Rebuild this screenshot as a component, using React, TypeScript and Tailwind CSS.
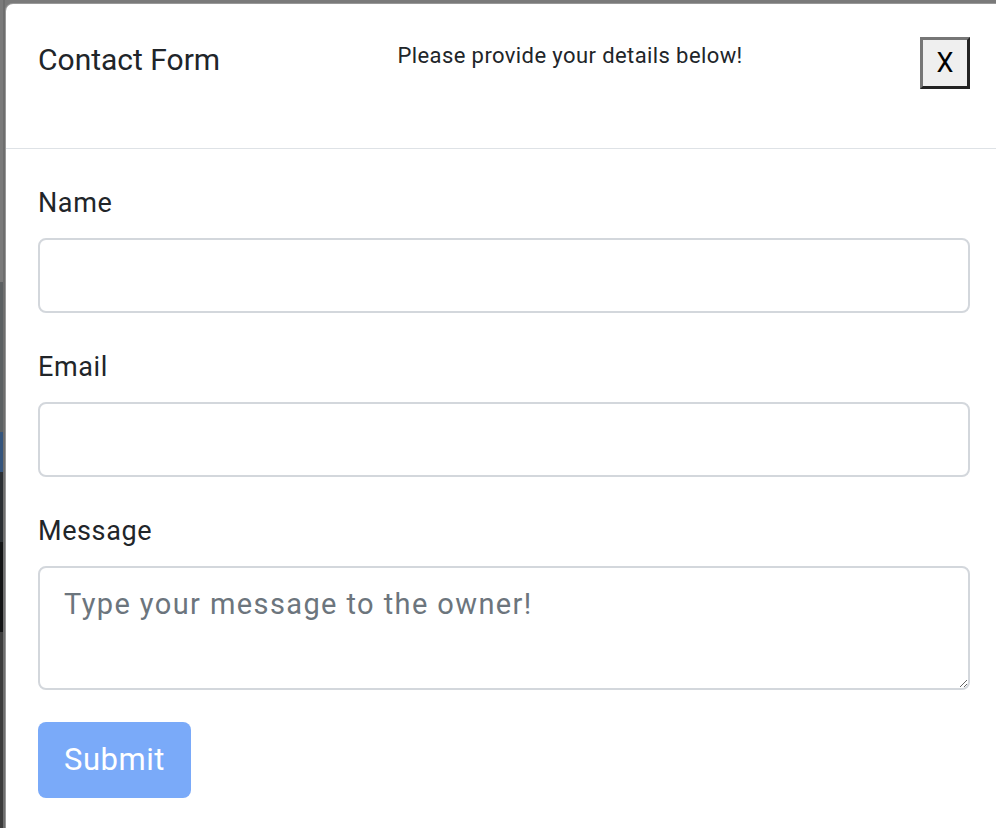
import { useState } from 'react';

const BACKDROP = [
  { h: 'h-[282px]', c: 'bg-[#7a7a7a]' },
  { h: 'h-[150px]', c: 'bg-[#5c6062]' },
  { h: 'h-[40px]', c: 'bg-[#34547c]' },
  { h: 'h-[70px]', c: 'bg-[#2b2f33]' },
  { h: 'h-[90px]', c: 'bg-[#121314]' },
  { h: 'h-[196px]', c: 'bg-[#3c3c3c]' },
];

function Field({ label, children }: { label: string; children: React.ReactNode }) {
  return (
    <div className="mb-[34px] flex flex-col">
      <label className="mb-[15px] text-[27px] leading-[40px] tracking-[0.6px] text-[#212529]">{label}</label>
      {children}
    </div>
  );
}

export default function App() {
  const [name, setName] = useState('');
  const [email, setEmail] = useState('');
  const [message, setMessage] = useState('');

  const inputCls =
    'h-[75px] w-full rounded-[8px] border-2 border-[#d3d7dc] bg-white px-[24px] text-[28px] text-[#495057] outline-none';

  return (
    <div className="flex h-[828px] w-[996px] overflow-hidden bg-[#7a7a7a]" style={{ fontFamily: 'Roboto, "Liberation Sans", sans-serif' }}>
      {/* backdrop peeking out on the left */}
      <div className="flex w-[5px] shrink-0">
        <div className="flex w-[3px] flex-col">
          {BACKDROP.map((b, i) => (
            <div key={i} className={`${b.h} ${b.c}`} />
          ))}
        </div>
        <div className="w-[2px] bg-[#6e6e6e]" />
      </div>

      <div className="mt-[3px] flex-1 rounded-tl-[8px] border-l border-t border-black/40 bg-white">
        {/* header */}
        <div className="flex h-[145px] items-start border-b border-[#dee2e6] pl-[32px] pr-[26px]">
          <h5 className="mt-[38px] text-[30px] leading-[36px] text-[#212529]">Contact Form</h5>
          <p className="mt-[38px] flex-1 text-center text-[22px] leading-[28px] tracking-[0.4px] text-[#212529]">
            Please provide your details below!
          </p>
          <button className="mt-[33px] flex h-[52px] w-[50px] items-center justify-center border-[3px] border-t-[#767676] border-l-[#767676] border-r-[#222] border-b-[#222] bg-[#efefef] text-[27px] text-black">
            X
          </button>
        </div>

        {/* body */}
        <form className="pl-[32px] pr-[26px] pt-[34px]" onSubmit={(e) => e.preventDefault()}>
          <Field label="Name">
            <input className={inputCls} value={name} onChange={(e) => setName(e.target.value)} />
          </Field>
          <Field label="Email">
            <input className={inputCls} value={email} onChange={(e) => setEmail(e.target.value)} />
          </Field>
          <div className="mb-[32px] flex flex-col">
            <label className="mb-[15px] text-[27px] leading-[40px] tracking-[0.6px] text-[#212529]">Message</label>
            <textarea
              className="h-[124px] w-full rounded-[8px] border-2 border-[#d3d7dc] bg-white px-[24px] pt-[15px] text-[29px] leading-[42px] tracking-[1.4px] text-[#495057] outline-none placeholder:text-[#6c757d]"
              placeholder="Type your message to the owner!"
              value={message}
              onChange={(e) => setMessage(e.target.value)}
            />
          </div>
          <button
            type="submit"
            disabled
            className="h-[76px] w-[153px] rounded-[8px] bg-[#7aaaf9] text-[31px] tracking-[0.5px] text-white"
          >
            Submit
          </button>
        </form>
      </div>
    </div>
  );
}
